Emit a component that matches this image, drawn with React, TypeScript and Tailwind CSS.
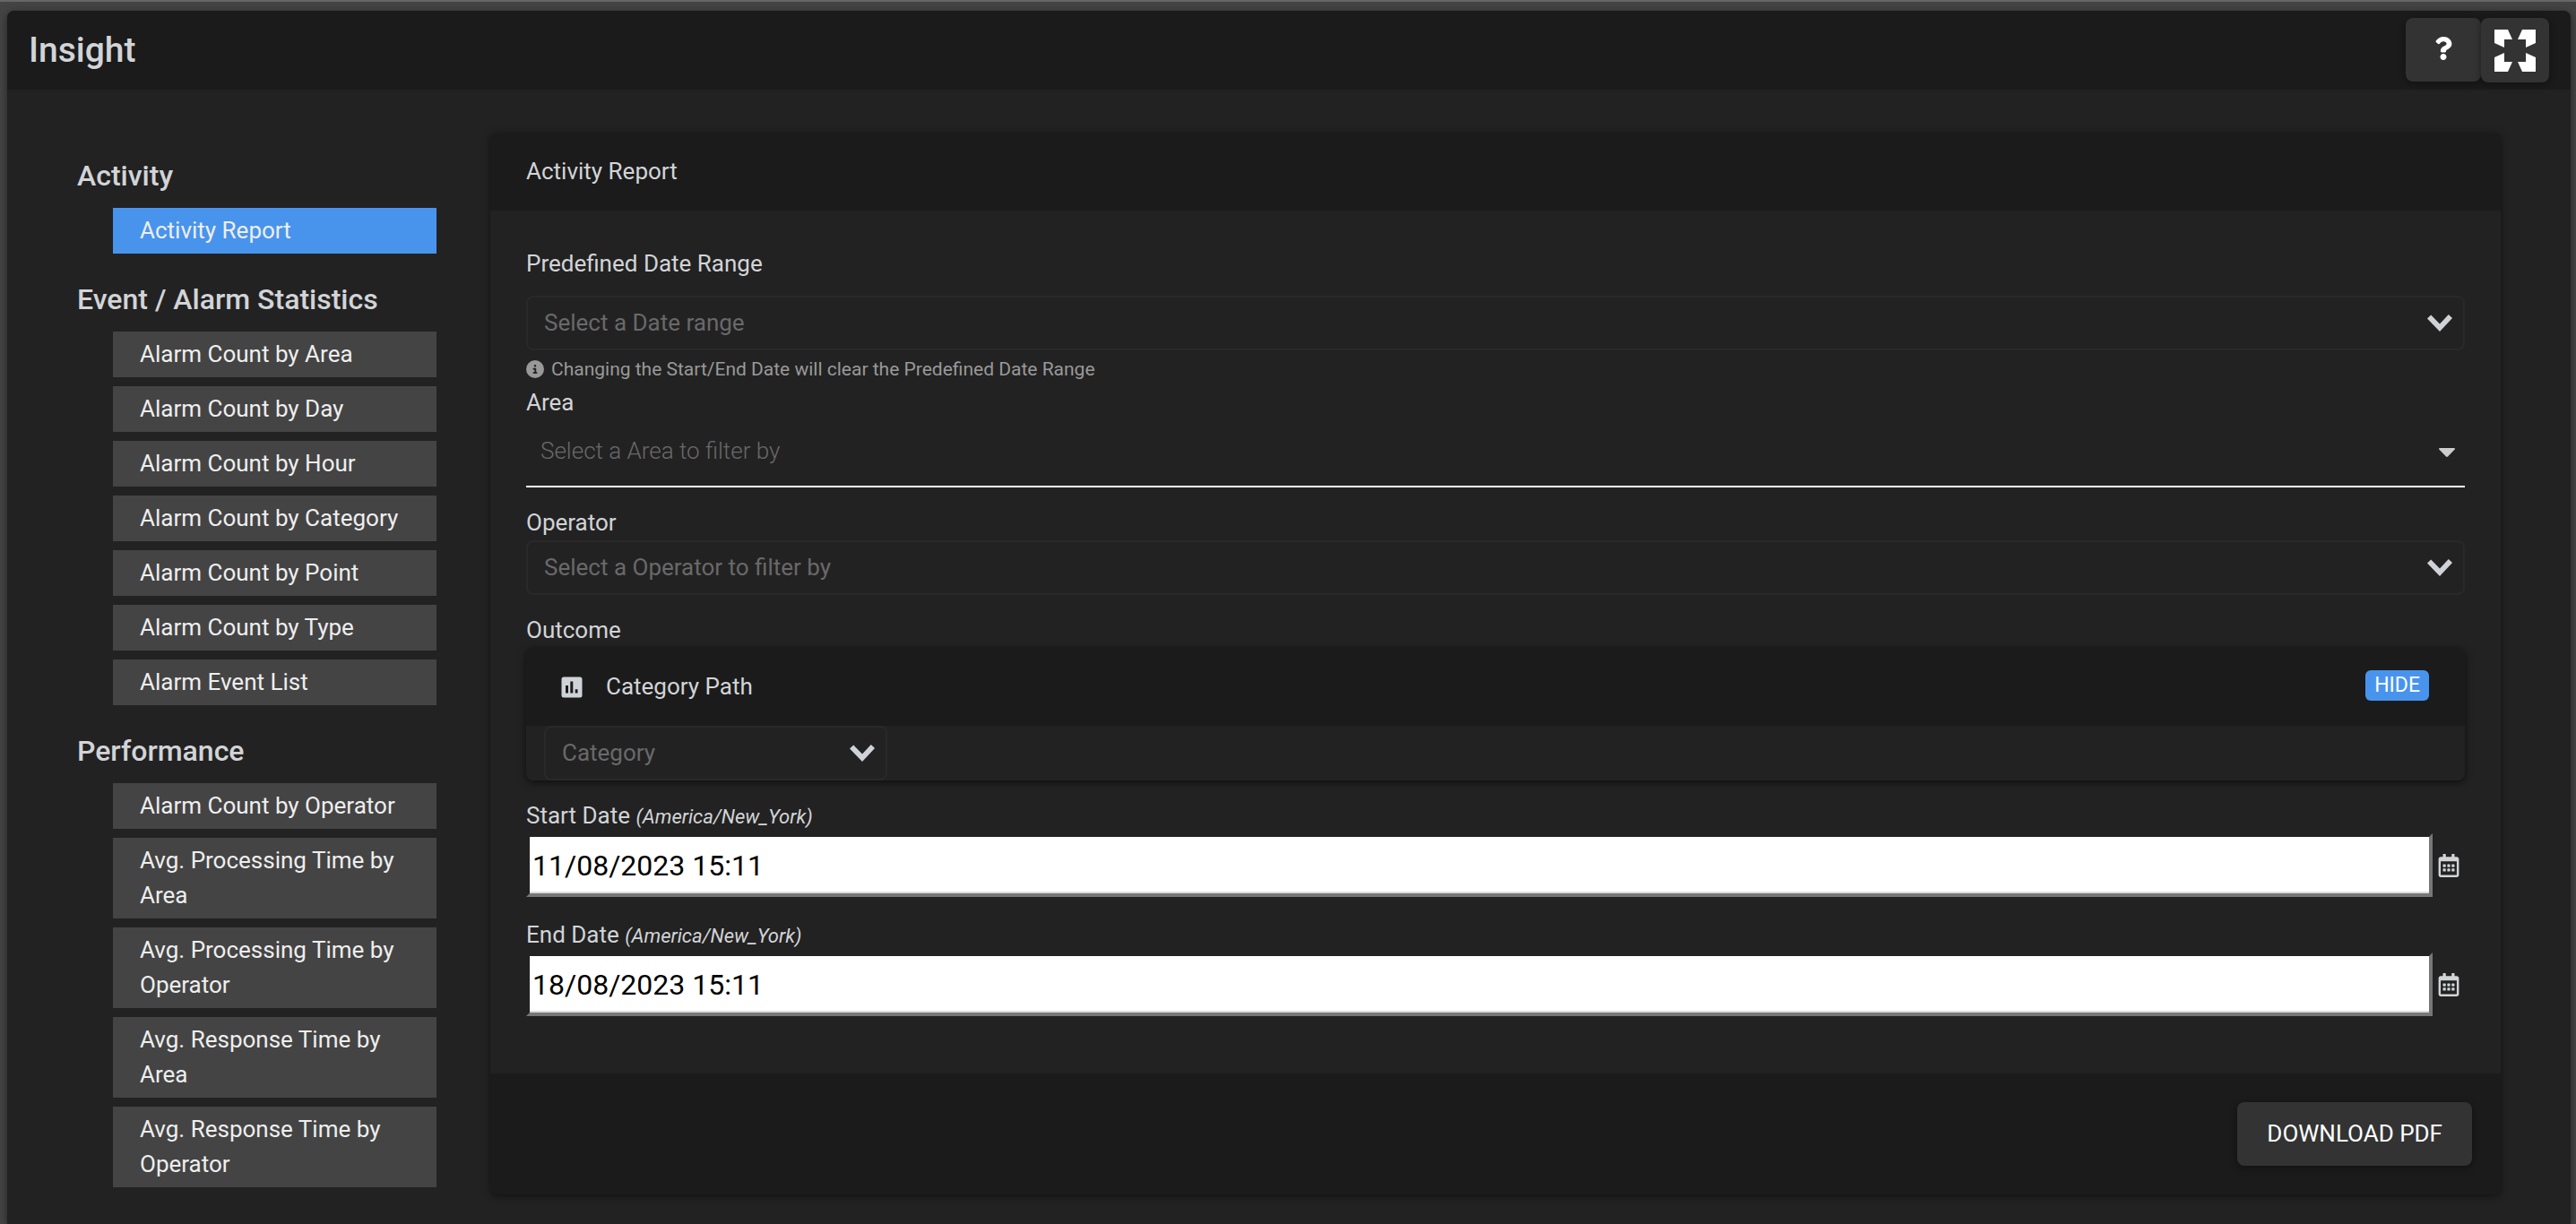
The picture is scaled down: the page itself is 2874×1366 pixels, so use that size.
import React, { useState } from 'react';
import { FaCircleInfo } from 'react-icons/fa6';
import { FaQuestion, FaRegCalendarAlt } from 'react-icons/fa';

interface ReportGroup {
  title: string;
  reports: string[];
}

const reportGroups: ReportGroup[] = [
  { title: 'Activity', reports: ['Activity Report'] },
  {
    title: 'Event / Alarm Statistics',
    reports: [
      'Alarm Count by Area',
      'Alarm Count by Day',
      'Alarm Count by Hour',
      'Alarm Count by Category',
      'Alarm Count by Point',
      'Alarm Count by Type',
      'Alarm Event List',
    ],
  },
  {
    title: 'Performance',
    reports: [
      'Alarm Count by Operator',
      'Avg. Processing Time by Area',
      'Avg. Processing Time by Operator',
      'Avg. Response Time by Area',
      'Avg. Response Time by Operator',
    ],
  },
];

const FullscreenIcon: React.FC = () => (
  <svg viewBox="0 0 46 47" className="h-[47px] w-[46px]" fill="currentColor" aria-hidden="true">
    <path d="M0 0H15L20 11H11V20L0 15Z" />
    <path d="M46 0H31L26 11H35V20L46 15Z" />
    <path d="M0 47H15L20 36H11V26L0 31Z" />
    <path d="M46 47H31L26 36H35V26L46 31Z" />
  </svg>
);

const ChartIcon: React.FC = () => (
  <svg viewBox="0 0 24 24" className="size-6" aria-hidden="true">
    <rect x="0.5" y="0.5" width="23" height="23" rx="2.5" fill="#cfd3d7" />
    <path d="M5 10H8V18.5H5ZM10.3 5.5H13.3V18.5H10.3ZM15.7 14.2H18.5V18.5H15.7Z" fill="#1b1b1b" />
  </svg>
);

interface SelectBoxProps {
  id: string;
  placeholder: string;
  label?: string;
  className?: string;
}

const SelectBox: React.FC<SelectBoxProps> = ({ id, placeholder, label, className = '' }) => (
  <div className={`relative ${className}`}>
    <select
      id={id}
      aria-label={label}
      className="h-[61px] w-full appearance-none rounded-lg border-2 border-[#292929] bg-transparent px-[18px] text-[#696969]"
    >
      <option>{placeholder}</option>
    </select>
    <svg
      viewBox="0 0 28 19"
      className="pointer-events-none absolute right-[14px] top-[21px] h-[19px] w-7"
      fill="#cfd3d7"
      aria-hidden="true"
    >
      <path d="M0 4.5L4.2 0.5L14 10.5L23.8 0L28 4L14 19Z" />
    </svg>
  </div>
);

interface DateFieldProps {
  id: string;
  label: string;
  value: string;
  onChange: (value: string) => void;
}

const DateField: React.FC<DateFieldProps> = ({ id, label, value, onChange }) => (
  <div>
    <label htmlFor={id} className="block leading-10">
      {label} <em className="text-[22px] leading-none">(America/New_York)</em>
    </label>
    <div className="flex items-center">
      <input
        id={id}
        type="text"
        value={value}
        onChange={(e) => onChange(e.target.value)}
        className="h-[71px] min-w-0 flex-1 border-4 border-t-[#222222] border-r-[#777777] border-b-[#777777] border-l-[#222222] bg-white pl-[3px] text-[32px] text-black shadow-[inset_0_-2px_0_#dddddd]"
      />
      <button type="button" aria-label={`Pick ${label}`} className="flex w-9 justify-center">
        <FaRegCalendarAlt className="h-[26px] w-6" />
      </button>
    </div>
  </div>
);

const Sidebar: React.FC = () => (
  <nav className="flex w-[401px] shrink-0 flex-col gap-[27px] pt-6">
    {reportGroups.map((group) => (
      <div key={group.title}>
        <h2 className="mb-3 text-[32px] leading-[48px] font-medium">{group.title}</h2>
        <ul className="ml-10 flex flex-col gap-[10px]">
          {group.reports.map((report) => (
            <li key={report}>
              <a
                href="#"
                className={`block px-[30px] py-[6px] leading-[39px] text-[#eeeeee] ${
                  report === 'Activity Report' ? 'bg-[#4894ed]' : 'bg-[#444444]'
                }`}
              >
                {report}
              </a>
            </li>
          ))}
        </ul>
      </div>
    ))}
  </nav>
);

const App: React.FC = () => {
  const [startDate, setStartDate] = useState('11/08/2023 15:11');
  const [endDate, setEndDate] = useState('18/08/2023 15:11');

  return (
    <div className="flex min-h-screen flex-col border-t-2 border-[#666666] bg-[#444444] pt-[10px] pr-[6px] pl-2 font-[Roboto,sans-serif] text-[26px] text-[#d2d4d7]">
      <div className="flex flex-1 flex-col rounded-t-lg bg-[#222222] shadow-[0_2px_8px_rgba(0,0,0,0.5)]">
        <header className="flex h-[88px] items-start justify-between rounded-t-lg bg-[#1b1b1b] px-6 pt-2">
          <h1 className="text-[39px] leading-[72px] font-medium">Insight</h1>
          <div className="flex text-white">
            <button
              type="button"
              aria-label="Help"
              className="flex h-[71px] w-[84px] items-center justify-center rounded-lg bg-[#333333] pb-[3px] shadow-[0_2px_8px_rgba(0,0,0,0.4)]"
            >
              <FaQuestion className="h-[26px] w-5" />
            </button>
            <button
              type="button"
              aria-label="Full screen"
              className="flex h-[72px] w-[76px] items-center justify-center rounded-lg bg-[#333333] shadow-[0_2px_8px_rgba(0,0,0,0.4)]"
            >
              <FullscreenIcon />
            </button>
          </div>
        </header>

        <div className="flex items-start gap-[60px] px-[78px] pt-12 pb-8">
          <Sidebar />

          <main className="min-w-0 flex-1 rounded-lg shadow-[0_2px_8px_rgba(0,0,0,0.5)]">
            <h2 className="rounded-t-lg bg-[#1b1b1b] px-10 leading-[87px]">Activity Report</h2>

            <div className="px-10 pt-[39px] pb-16">
              <label htmlFor="date-range" className="mb-4 block leading-10">
                Predefined Date Range
              </label>
              <SelectBox id="date-range" placeholder="Select a Date range" />
              <p className="mt-[6px] flex items-center gap-2 text-[21px] leading-[30px] text-[#999999]">
                <FaCircleInfo className="size-5" />
                Changing the Start/End Date will clear the Predefined Date Range
              </p>

              <label htmlFor="area" className="mt-[2px] block leading-10">
                Area
              </label>
              <div className="relative">
                <select
                  id="area"
                  className="h-[75px] w-full appearance-none border-b-2 border-white bg-transparent px-4 pb-[5px] font-light text-[#696969]"
                >
                  <option>Select a Area to filter by</option>
                </select>
                <svg
                  viewBox="0 0 18 10"
                  className="pointer-events-none absolute top-[31px] right-[11px] h-[10px] w-[18px]"
                  fill="#cccccc"
                  aria-hidden="true"
                >
                  <path d="M1 0H17Q18 0 18 1.2L10 9.5Q9 10.4 8 9.5L0 1.2Q0 0 1 0Z" />
                </svg>
              </div>

              <label htmlFor="operator" className="mt-[19px] block leading-10">
                Operator
              </label>
              <SelectBox id="operator" placeholder="Select a Operator to filter by" />

              <p className="mt-[19px] leading-10">Outcome</p>
              <section className="mb-[19px] rounded-lg shadow-[0_2px_8px_rgba(0,0,0,0.6)]">
                <div className="flex h-[87px] items-center rounded-t-lg bg-[#1b1b1b] pr-10 pl-[39px]">
                  <ChartIcon />
                  <h3 className="ml-[26px]">Category Path</h3>
                  <button
                    type="button"
                    className="mb-1 ml-auto h-[34px] rounded-md bg-[#4894ed] px-[10px] text-[23px] leading-[34px] text-white"
                  >
                    HIDE
                  </button>
                </div>
                <SelectBox id="category" label="Category" placeholder="Category" className="ml-5 w-[383px]" />
              </section>

              <div className="flex flex-col gap-[22px]">
                <DateField id="start-date" label="Start Date" value={startDate} onChange={setStartDate} />
                <DateField id="end-date" label="End Date" value={endDate} onChange={setEndDate} />
              </div>
            </div>

            <footer className="flex justify-end rounded-b-lg bg-[#1b1b1b] p-8">
              <button
                type="button"
                className="h-[71px] rounded-lg bg-[#333333] px-[33px] text-white shadow-[0_2px_8px_rgba(0,0,0,0.4)]"
              >
                DOWNLOAD PDF
              </button>
            </footer>
          </main>
        </div>
      </div>
    </div>
  );
};

export default App;
